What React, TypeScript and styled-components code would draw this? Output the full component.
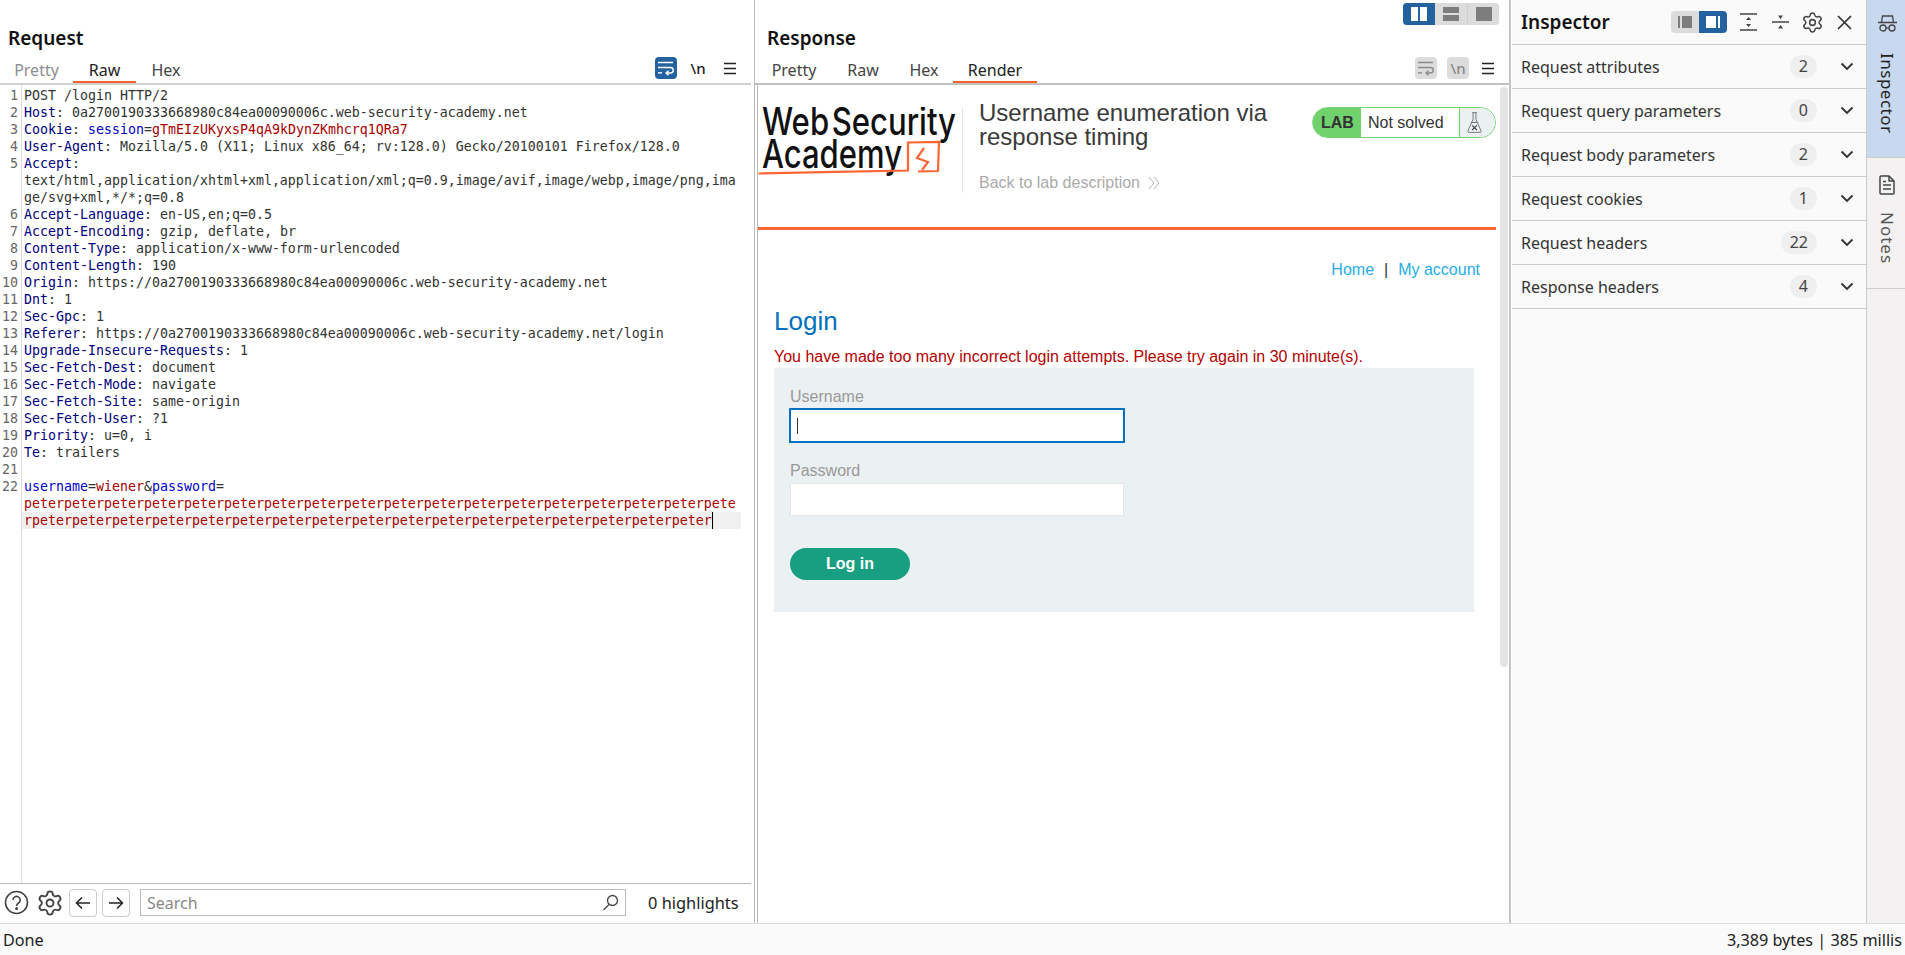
import React from "react";
import styled, { createGlobalStyle } from "styled-components";
import { Settings } from "lucide-react";

const Global = createGlobalStyle`
  html, body { margin: 0; padding: 0; height: 100%; background: #fff; overflow: hidden; }
  #root { height: 100%; }
  * { box-sizing: border-box; }
`;

const UI = `"Noto Sans", sans-serif`;
const WEB = `"Liberation Sans", Arial, sans-serif`;
const MONO = `"DejaVu Sans Mono", monospace`;

const Shell = styled.div`
  width: 1905px; height: 955px; display: flex; flex-direction: column;
  font-family: ${UI}; color: #222;
`;
const Main = styled.div`display: flex; height: 923px; flex: none;`;
const Pane = styled.section<{ $w: number }>`
  width: ${(p) => p.$w}px; flex: none; height: 100%; display: flex; flex-direction: column;
`;
const ResponsePane = styled(Pane)`
  border-left: 1px solid #bbb; border-right: 2px solid #c4c4c4; margin-left: 3px;
`;
const PaneHead = styled.div`display: flex; justify-content: space-between; align-items: flex-start; height: 53px; flex: none;`;
const PaneTitle = styled.h2<{ $x: number }>`
  margin: 0; padding: 25px 0 0 ${(p) => p.$x}px; font: 600 19px/26px ${UI}; color: #111;
`;
const LayoutToggle = styled.div`
  margin: 3px 10px 0 0; display: flex; height: 22px; border-radius: 4px; overflow: hidden; background: #dcdcdc;
`;
const LayoutBtn = styled.div<{ $on?: boolean; $div?: boolean }>`
  width: 32px; display: flex; align-items: center; justify-content: center;
  background: ${(p) => (p.$on ? "#23629f" : "#dcdcdc")};
  border-left: ${(p) => (p.$div ? "1px solid #cfcfcf" : "none")};
`;
const TabBar = styled.div<{ $line: string }>`
  height: 32px; flex: none; display: flex; align-items: flex-start;
  border-bottom: 2px solid ${(p) => p.$line};
`;
const Tabs = styled.div<{ $x?: number }>`display: flex; padding-left: ${(p) => p.$x || 0}px;`;
const Tab = styled.div<{ $on?: boolean; $dim?: boolean; $w: number }>`
  width: ${(p) => p.$w}px; height: 30px; text-align: center; font: 400 16px/34px ${UI};
  color: ${(p) => (p.$dim ? "#8e8e8e" : p.$on ? "#222" : "#444")};
  box-shadow: ${(p) => (p.$on ? "inset 0 -2px 0 #f2652e" : "none")};
`;
const TabTools = styled.div`margin-left: auto; display: flex; align-items: center; height: 22px; margin-top: 4px;`;
const ToolBox = styled.div<{ $bg?: string; $col?: string; $r: number }>`
  width: 22px; height: 22px; margin-right: ${(p) => p.$r}px; border-radius: 4px;
  background: ${(p) => p.$bg || "transparent"}; color: ${(p) => p.$col || "#222"};
  display: flex; align-items: center; justify-content: center;
  font: 500 15px/22px ${UI};
`;

const CodeArea = styled.div`flex: 1; display: flex; min-height: 0; font: 13.29px/17px ${MONO}; color: #333;`;
const Gutter = styled.div`
  width: 22px; flex: none; border-right: 1px solid #ddd; padding: 2px 3px 0 0; text-align: right; color: #666; white-space: pre;
`;
const GutterRow = styled.div`height: 17px;`;
const Lines = styled.div`flex: 1; padding: 2px 10px 0 0;`;
const CodeRow = styled.div<{ $hl?: boolean }>`
  height: 17px; padding-left: 2px; white-space: pre;
  background: ${(p) => (p.$hl ? "#f0f0f0" : "transparent")};
`;
const K = styled.span`color: #000080;`;
const N = styled.span`color: #0000cc;`;
const V = styled.span`color: #a80000;`;
const Caret = styled.span`display: inline-block; width: 1px; height: 17px; vertical-align: top; background: #000;`;

const SearchBar = styled.div`
  height: 40px; flex: none; border-top: 1px solid #bbb; display: flex; align-items: center; padding: 0 0 2px 3px;
`;
const RoundIcon = styled.div<{ $mr: number; $w: number }>`width: ${(p) => p.$w}px; height: 26px; margin-right: ${(p) => p.$mr}px; display:flex; align-items:center; justify-content:center; color: #444;`;
const ArrowBtn = styled.div`
  width: 28px; height: 28px; margin-right: 5px; border: 1px solid #ccc; border-radius: 4px; background: #fff;
  display: flex; align-items: center; justify-content: center;
`;
const SearchBox = styled.div`
  width: 486px; height: 27px; margin-left: 5px; border: 1px solid #bbb; display: flex; align-items: center;
  padding: 0 6px; font: 16px ${UI}; color: #888; justify-content: space-between;
`;
const Highlights = styled.div`margin-left: 22px; font: 16.4px ${UI}; color: #222; white-space: nowrap;`;

const RenderBox = styled.div`flex: 1; display: flex; min-height: 0; margin-left: 2px; border-left: 1px solid #bbb;`;
const RenderPage = styled.div`width: 738px; flex: none; font-family: ${WEB}; font-size: 16px;`;
const WebHeader = styled.header`height: 145px; border-bottom: 3px solid #ff6633; display: flex; align-items: flex-start;`;
const LogoWrap = styled.div`width: 205px; height: 86px; margin-top: 22px; border-right: 1px solid #e6e6e6; flex: none;`;
const LabTitleBlock = styled.div`margin: 16px 0 0 16px; width: 310px;`;
const LabTitle = styled.h2`margin: 0; font: 400 24px/24px ${WEB}; color: #3a3a3a;`;
const BackLink = styled.div`margin-top: 24px; font: 16px/20px ${WEB}; color: #aaa; display: flex; align-items: center; gap: 8px;`;
const LabBadge = styled.div`
  margin: 22px 0 0 auto; width: 184px; height: 31px; border: 1px solid #70d16d; border-radius: 16px; overflow: hidden; display: flex;
`;
const LabTag = styled.div`width: 48px; background: #70d16d; color: #333; font: 700 16px/29px ${WEB}; padding-left: 8px; flex: none;`;
const LabStatus = styled.div`flex: 1; padding-left: 7px; font: 16px/29px ${WEB}; color: #333; background: #fff;`;
const LabIcon = styled.div`width: 36px; flex: none; background: #ebf0f2; border-left: 1px solid #70d16d; display:flex; align-items:center; justify-content:center; padding-right: 6px;`;
const SiteNav = styled.nav`margin-top: 30px; padding-right: 16px; display: flex; justify-content: flex-end; font: 16px/20px ${WEB}; color: #333;`;
const NavLink = styled.span`color: #29ace5;`;
const NavSep = styled.span`margin: 0 10px;`;
const Content = styled.div`padding-left: 16px;`;
const LoginHeading = styled.h1`margin: 26px 0 0; font: 400 26px/30px ${WEB}; color: #0071bc;`;
const ErrorMsg = styled.p`margin: 11px 0 0; font: 16px/20px ${WEB}; color: #b50000;`;
const FormPanel = styled.form`margin-top: 1px; width: 700px; height: 244px; background: #ebf0f2; padding: 19px 16px 0; display: flex; flex-direction: column; align-items: flex-start;`;
const Label = styled.label<{ $mt?: number }>`margin-top: ${(p) => p.$mt || 0}px; font: 16px/20px ${WEB}; color: #999;`;
const FocusField = styled.div`margin: 1px 0 0 -1px; width: 336px; height: 35px; border: 2px solid #0071bc; background: #fff; display: flex; align-items: center; padding-left: 6px;`;
const FieldCaret = styled.span`width: 1px; height: 16px; background: #333;`;
const Field = styled.div`margin-top: 2px; width: 334px; height: 33px; border: 1px solid #e6e6e6; background: #fff;`;
const LoginBtn = styled.button`margin-top: 32px; width: 120px; height: 32px; border: 0; border-radius: 25px; background: #189e81; color: #fff; font: 700 16px/32px ${WEB}; padding: 0;`;
const ScrollTrack = styled.div`width: 8px; margin-left: 4px; padding-top: 2px; flex: none;`;
const ScrollThumb = styled.div`width: 8px; height: 580px; background: #e4e4e4; border-radius: 4px;`;

const InspectorPane = styled(Pane)`background: #fafafa; margin-left: 1px; border-right: 1px solid #ccc;`;
const InspHead = styled.div`height: 45px; flex: none; border-bottom: 1px solid #ccc; display: flex; align-items: center; padding: 0 6px 0 9px;`;
const InspTitle = styled.h2`margin: 0; font: 600 19px/24px ${UI}; color: #111; flex: 1;`;
const DockToggle = styled.div`display: flex; width: 56px; height: 22px; margin-right: 5px; border-radius: 4px; overflow: hidden;`;
const DockBtn = styled.div<{ $on?: boolean }>`flex: 1; display: flex; align-items: center; justify-content: center; background: ${(p) => (p.$on ? "#23629f" : "#dcdcdc")};`;
const IconSlot = styled.div`width: 32px; height: 32px; display: flex; align-items: center; justify-content: center; color: #444;`;
const InspRow = styled.div`height: 44px; flex: none; border-bottom: 1px solid #ccc; display: flex; align-items: center; padding: 0 4px 0 9px;`;
const RowLabel = styled.div`flex: 1; font: 16px/24px ${UI}; color: #333;`;
const Count = styled.div`height: 23px; min-width: 27px; padding: 0 9px; border-radius: 12px; background: #efefef; font: 16px/23px ${UI}; color: #444; text-align: center; margin-right: 15px;`;
const Chevron = styled.div`width: 30px; display: flex; justify-content: center;`;

const SideBar = styled.aside`width: 40px; flex: none; height: 100%; background: #f3f1f1;`;
const SideTab = styled.div<{ $on?: boolean; $h: number; $pt: number }>`
  height: ${(p) => p.$h}px; background: ${(p) => (p.$on ? "#c8d8ef" : "#f3f1f1")};
  border-bottom: 1px solid #ccc; display: flex; flex-direction: column; align-items: center; padding-top: ${(p) => p.$pt}px;
`;
const SideLabel = styled.div<{ $mt: number; $col: string; $ls: number }>`
  writing-mode: vertical-rl; margin-top: ${(p) => p.$mt}px; font: 17px/20px ${UI}; letter-spacing: ${(p) => p.$ls}px; color: ${(p) => p.$col};
`;

const Status = styled.footer`
  height: 32px; flex: none; background: #fafafa; border-top: 1px solid #ddd; display: flex; justify-content: space-between; align-items: center;
  padding: 0 3px; font: 16.2px ${UI}; color: #222;
`;

const WrapIcon = ({ c }: { c: string }) => (
  <svg width="16" height="15" viewBox="0 0 16 15" fill="none" stroke={c} strokeWidth="1.4">
    <path d="M0 1.5h15M0 6.5h12.5a2.6 2.6 0 0 1 0 5.5H8" />
    <path d="M10.5 9.7L8 12l2.5 2.3" />
    <path d="M0 11.8h4" />
  </svg>
);
const Burger = () => (
  <svg width="14" height="13" viewBox="0 0 14 13" stroke="#222" strokeWidth="1.7"><path d="M1 1.5h12M1 6.5h12M1 11.5h12" /></svg>
);
const ChevronIcon = () => (
  <svg width="14" height="9" viewBox="0 0 14 9" fill="none" stroke="#333" strokeWidth="1.9"><path d="M1.5 1.5L7 7l5.5-5.5" /></svg>
);

const Logo = () => (
  <svg width="204" height="86" viewBox="1 0 204 86">
    <text x="5" y="28" textLength="194" lengthAdjust="spacingAndGlyphs" fontFamily="Inter, sans-serif" fontSize="38" fontWeight="500" wordSpacing="-7" fill="#111">Web Security</text>
    <text x="5" y="61" textLength="140" lengthAdjust="spacingAndGlyphs" fontFamily="Inter, sans-serif" fontSize="39" fontWeight="500" fill="#111">Academy</text>
    <path d="M1.5 66.5C40 66 110 64 151 63.5V35.5L182 34.8 181 64 161 64.5" fill="none" stroke="#ff6633" strokeWidth="2.2" />
    <path d="M167 41l-7 10 11 4-6 8" fill="none" stroke="#ff6633" strokeWidth="2.2" />
  </svg>
);
const Flask = () => (
  <svg width="15" height="23" viewBox="0 0 16 24" fill="none" stroke="#666" strokeWidth="0.9">
    <path d="M5.5 1.5h5M6.5 1.5v7L1 21a1 1 0 0 0 1 1.5h12a1 1 0 0 0 1-1.5L9.5 8.5v-7" />
    <path d="M4 12h8" />
    <path d="M5.5 15l5 5M10.5 15l-5 5" strokeWidth="1.2" stroke="#444" />
  </svg>
);

type Seg = { t: string; k?: "k" | "n" | "v" };
const h = (key: string, val: string): Seg[] => [{ t: key, k: "k" }, { t: ": " + val }];
const rows: { n?: number; segs: Seg[]; hl?: boolean; caret?: boolean }[] = [
  { n: 1, segs: [{ t: "POST /login HTTP/2" }] },
  { n: 2, segs: h("Host", "0a2700190333668980c84ea00090006c.web-security-academy.net") },
  { n: 3, segs: [{ t: "Cookie", k: "k" }, { t: ": " }, { t: "session", k: "n" }, { t: "=" }, { t: "gTmEIzUKyxsP4qA9kDynZKmhcrq1QRa7", k: "v" }] },
  { n: 4, segs: h("User-Agent", "Mozilla/5.0 (X11; Linux x86_64; rv:128.0) Gecko/20100101 Firefox/128.0") },
  { n: 5, segs: [{ t: "Accept", k: "k" }, { t: ":" }] },
  { segs: [{ t: "text/html,application/xhtml+xml,application/xml;q=0.9,image/avif,image/webp,image/png,ima" }] },
  { segs: [{ t: "ge/svg+xml,*/*;q=0.8" }] },
  { n: 6, segs: h("Accept-Language", "en-US,en;q=0.5") },
  { n: 7, segs: h("Accept-Encoding", "gzip, deflate, br") },
  { n: 8, segs: h("Content-Type", "application/x-www-form-urlencoded") },
  { n: 9, segs: h("Content-Length", "190") },
  { n: 10, segs: h("Origin", "https://0a2700190333668980c84ea00090006c.web-security-academy.net") },
  { n: 11, segs: h("Dnt", "1") },
  { n: 12, segs: h("Sec-Gpc", "1") },
  { n: 13, segs: h("Referer", "https://0a2700190333668980c84ea00090006c.web-security-academy.net/login") },
  { n: 14, segs: h("Upgrade-Insecure-Requests", "1") },
  { n: 15, segs: h("Sec-Fetch-Dest", "document") },
  { n: 16, segs: h("Sec-Fetch-Mode", "navigate") },
  { n: 17, segs: h("Sec-Fetch-Site", "same-origin") },
  { n: 18, segs: h("Sec-Fetch-User", "?1") },
  { n: 19, segs: h("Priority", "u=0, i") },
  { n: 20, segs: h("Te", "trailers") },
  { n: 21, segs: [{ t: " " }] },
  { n: 22, segs: [{ t: "username", k: "n" }, { t: "=" }, { t: "wiener", k: "v" }, { t: "&" }, { t: "password", k: "n" }, { t: "=" }] },
  { segs: [{ t: "peter".repeat(17) + "pete", k: "v" }] },
  { segs: [{ t: "r" + "peter".repeat(17), k: "v" }], hl: true, caret: true },
];

const insp: [string, string][] = [
  ["Request attributes", "2"],
  ["Request query parameters", "0"],
  ["Request body parameters", "2"],
  ["Request cookies", "1"],
  ["Request headers", "22"],
  ["Response headers", "4"],
];

export default function App() {
  return (
    <Shell>
      <Global />
      <Main>
        <Pane $w={751}>
          <PaneHead><PaneTitle $x={8}>Request</PaneTitle></PaneHead>
          <TabBar $line="#d0d0d0">
            <Tabs>
              <Tab $w={73} $dim>Pretty</Tab>
              <Tab $w={63} $on>Raw</Tab>
              <Tab $w={60}>Hex</Tab>
            </Tabs>
            <TabTools>
              <ToolBox $bg="#23629f" $r={10}><WrapIcon c="#fff" /></ToolBox>
              <ToolBox $r={10}>\n</ToolBox>
              <ToolBox $r={10}><Burger /></ToolBox>
            </TabTools>
          </TabBar>
          <CodeArea>
            <Gutter>
              {rows.map((r, i) => <GutterRow key={i}>{r.n ?? " "}</GutterRow>)}
            </Gutter>
            <Lines>
              {rows.map((r, i) => (
                <CodeRow key={i} $hl={r.hl}>
                  {r.segs.map((s, j) =>
                    s.k === "k" ? <K key={j}>{s.t}</K> : s.k === "n" ? <N key={j}>{s.t}</N> : s.k === "v" ? <V key={j}>{s.t}</V> : <span key={j}>{s.t}</span>
                  )}
                  {r.caret && <Caret />}
                </CodeRow>
              ))}
            </Lines>
          </CodeArea>
          <SearchBar>
            <RoundIcon $w={26} $mr={7}>
              <svg width="25" height="25" viewBox="0 0 25 25" fill="none" stroke="#444" strokeWidth="1.6">
                <circle cx="12.5" cy="12.5" r="11" />
                <path d="M9 10a3.6 3.6 0 1 1 5.6 3c-1.4.9-2 1.5-2 3" />
                <circle cx="12.6" cy="18.6" r=".7" fill="#444" />
              </svg>
            </RoundIcon>
            <RoundIcon $w={28} $mr={5}><Settings size={28} strokeWidth={1.6} /></RoundIcon>
            <ArrowBtn>
              <svg width="16" height="14" viewBox="0 0 16 14" fill="none" stroke="#222" strokeWidth="1.5"><path d="M15 7H1.5M7 1.5L1.5 7 7 12.5" /></svg>
            </ArrowBtn>
            <ArrowBtn>
              <svg width="16" height="14" viewBox="0 0 16 14" fill="none" stroke="#222" strokeWidth="1.5"><path d="M1 7h13.5M9 1.5L14.5 7 9 12.5" /></svg>
            </ArrowBtn>
            <SearchBox>
              Search
              <svg width="17" height="17" viewBox="0 0 17 17" fill="none" stroke="#444" strokeWidth="1.3"><circle cx="10.5" cy="6.5" r="5" /><path d="M7 10.5L1.5 16" /></svg>
            </SearchBox>
            <Highlights>0 highlights</Highlights>
          </SearchBar>
        </Pane>

        <ResponsePane $w={757}>
          <PaneHead>
            <PaneTitle $x={12}>Response</PaneTitle>
            <LayoutToggle>
              <LayoutBtn $on>
                <svg width="16" height="14" viewBox="0 0 16 14" fill="#fff"><rect x="0" y="0" width="7" height="14" /><rect x="9" y="0" width="7" height="14" /></svg>
              </LayoutBtn>
              <LayoutBtn>
                <svg width="16" height="14" viewBox="0 0 16 14" fill="#7d7d7d"><rect y="0" width="16" height="6" /><rect y="8" width="16" height="6" /></svg>
              </LayoutBtn>
              <LayoutBtn $div>
                <svg width="16" height="14" viewBox="0 0 16 14" fill="#7d7d7d"><rect width="16" height="14" /></svg>
              </LayoutBtn>
            </LayoutToggle>
          </PaneHead>
          <TabBar $line="#c4c0c0">
            <Tabs $x={2}>
              <Tab $w={74}>Pretty</Tab>
              <Tab $w={64}>Raw</Tab>
              <Tab $w={58}>Hex</Tab>
              <Tab $w={84} $on>Render</Tab>
            </Tabs>
            <TabTools>
              <ToolBox $bg="#dcdcdc" $r={10}><WrapIcon c="#8a8a8a" /></ToolBox>
              <ToolBox $bg="#dcdcdc" $col="#888" $r={8}>\n</ToolBox>
              <ToolBox $r={10}><Burger /></ToolBox>
            </TabTools>
          </TabBar>
          <RenderBox>
            <RenderPage>
              <WebHeader>
                <LogoWrap><Logo /></LogoWrap>
                <LabTitleBlock>
                  <LabTitle>Username enumeration via response timing</LabTitle>
                  <BackLink>
                    Back to lab description
                    <svg width="12" height="14" viewBox="0 0 12 14" fill="none" stroke="#b3b3b3" strokeWidth="1"><path d="M1 1l5 6-5 6M6 1l5 6-5 6" /></svg>
                  </BackLink>
                </LabTitleBlock>
                <LabBadge>
                  <LabTag>LAB</LabTag>
                  <LabStatus>Not solved</LabStatus>
                  <LabIcon><Flask /></LabIcon>
                </LabBadge>
              </WebHeader>
              <SiteNav><NavLink>Home</NavLink><NavSep>|</NavSep><NavLink>My account</NavLink></SiteNav>
              <Content>
                <LoginHeading>Login</LoginHeading>
                <ErrorMsg>You have made too many incorrect login attempts. Please try again in 30 minute(s).</ErrorMsg>
                <FormPanel>
                  <Label>Username</Label>
                  <FocusField><FieldCaret /></FocusField>
                  <Label $mt={18}>Password</Label>
                  <Field />
                  <LoginBtn type="button">Log in</LoginBtn>
                </FormPanel>
              </Content>
            </RenderPage>
            <ScrollTrack><ScrollThumb /></ScrollTrack>
          </RenderBox>
        </ResponsePane>

        <InspectorPane $w={355}>
          <InspHead>
            <InspTitle>Inspector</InspTitle>
            <DockToggle>
              <DockBtn>
                <svg width="14" height="12" viewBox="0 0 14 12" fill="#7d7d7d"><rect width="2" height="12" /><rect x="4" width="10" height="12" /></svg>
              </DockBtn>
              <DockBtn $on>
                <svg width="14" height="12" viewBox="0 0 14 12" fill="#fff"><rect width="10" height="12" /><rect x="12" width="2" height="12" /></svg>
              </DockBtn>
            </DockToggle>
            <IconSlot>
              <svg width="17" height="18" viewBox="0 0 17 18" fill="none" stroke="#444" strokeWidth="1.5">
                <path d="M0 1h17M0 17h17" /><path d="M8.5 4l2.5 3H6zM8.5 14l-2.5-3h5z" fill="#444" stroke="none" />
              </svg>
            </IconSlot>
            <IconSlot>
              <svg width="17" height="20" viewBox="0 0 17 20" fill="none" stroke="#444" strokeWidth="1.5">
                <path d="M0 10h17" /><path d="M8.5 7L6 3.5h5zM8.5 13l2.5 3.5H6z" fill="#444" stroke="none" />
              </svg>
            </IconSlot>
            <IconSlot><Settings size={23} strokeWidth={1.6} /></IconSlot>
            <IconSlot>
              <svg width="15" height="15" viewBox="0 0 15 15" fill="none" stroke="#333" strokeWidth="1.7"><path d="M1 1l13 13M14 1L1 14" /></svg>
            </IconSlot>
          </InspHead>
          {insp.map(([l, c]) => (
            <InspRow key={l}>
              <RowLabel>{l}</RowLabel>
              <Count>{c}</Count>
              <Chevron><ChevronIcon /></Chevron>
            </InspRow>
          ))}
        </InspectorPane>

        <SideBar>
          <SideTab $on $h={158} $pt={15}>
            <svg width="19" height="17" viewBox="0 0 19 17" fill="none" stroke="#444" strokeWidth="1.3">
              <path d="M0 7.5h19M3.5 7.5L4.5 1h10l1 6.5" />
              <circle cx="5" cy="13" r="3" /><circle cx="14" cy="13" r="3" /><path d="M8 13h3" />
            </svg>
            <SideLabel $mt={21} $col="#222" $ls={0.5}>Inspector</SideLabel>
          </SideTab>
          <SideTab $h={131} $pt={17}>
            <svg width="16" height="20" viewBox="0 0 16 20" fill="none" stroke="#444" strokeWidth="1.5" strokeLinejoin="round">
              <path d="M2 1h8l5 5v12a1 1 0 0 1-1 1H2a1 1 0 0 1-1-1V2a1 1 0 0 1 1-1z" />
              <path d="M10 1v5h5M4 10h8M4 14h8M4 6.5h3" />
            </svg>
            <SideLabel $mt={17} $col="#555" $ls={1}>Notes</SideLabel>
          </SideTab>
        </SideBar>
      </Main>
      <Status><span>Done</span><span>3,389 bytes | 385 millis</span></Status>
    </Shell>
  );
}
